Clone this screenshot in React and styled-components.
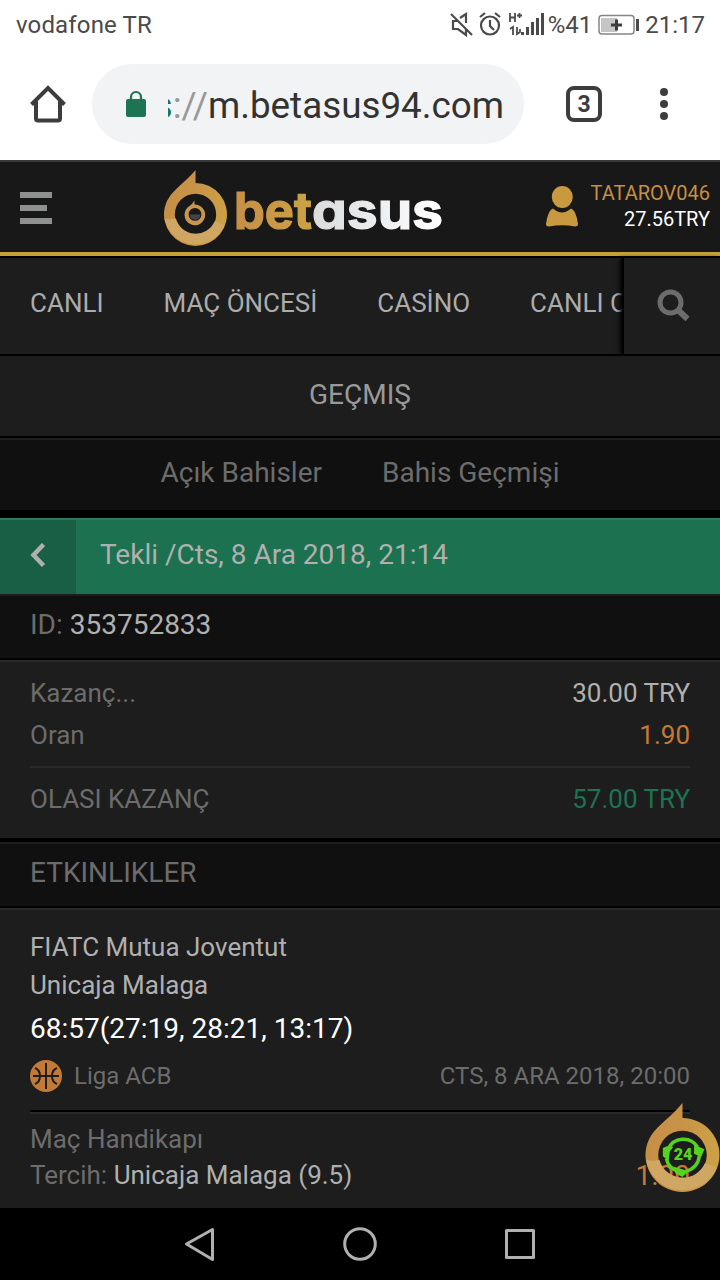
import React from "react";
import styled, { createGlobalStyle } from "styled-components";

const GlobalStyle = createGlobalStyle`
  * {
    box-sizing: border-box;
  }

  body {
    margin: 0;
    background: #000;
    font-family: Roboto, "Noto Sans", sans-serif;
  }
`;

function StatusIcons() {
  return (
    <svg width="96" height="26" viewBox="0 0 96 26" fill="none">
      <g stroke="#4a4a4a" strokeWidth="2.200">
        <path d="M1 2L22 23" />
        <path d="M8 9H3v8h5l8 6v-6M10 6l6-4v9" />
        <circle cx="40" cy="13.500" r="9" />
        <path d="M40 8v6l4 4M30 5l5-4M50 5l-5-4" />
      </g>
      <g stroke="#4a4a4a" strokeWidth="1.800">
        <path d="M60 1v9M65 1v9M60 5.500h5M67 3.500h5M69.500 1v5" />
        <path d="M60 17l3-2v8M67 15v7l3-2v-3" />
      </g>
      <g fill="#4a4a4a">
        <rect x="71" y="20" width="3" height="3" />
        <rect x="76" y="15" width="3" height="8" />
        <rect x="81" y="10" width="3" height="13" />
        <rect x="86" y="6" width="3" height="17" />
        <rect x="91" y="1" width="3" height="22" />
      </g>
    </svg>
  );
}

function BatteryIcon() {
  return (
    <svg width="42" height="22" viewBox="0 0 42 22" fill="none">
      <rect x="1" y="1.500" width="35" height="18.500" rx="3" stroke="#858585" strokeWidth="1.500" />
      <rect x="3" y="4" width="16" height="14" fill="#c4c6c5" />
      <path d="M18.500 5.500v11M13 11h11" stroke="#3c3c3c" strokeWidth="3" />
      <rect x="38" y="5" width="3" height="12" fill="#4a4a4a" />
    </svg>
  );
}

function HomeIcon() {
  return (
    <svg width="36" height="38" viewBox="0 0 36 38" fill="none" stroke="#3c3c3c" strokeWidth="4">
      <path d="M1.500 19.500L18 3l16.500 16.500" />
      <path d="M6 16v17.500q0 2 2 2h20q2 0 2-2V16" />
    </svg>
  );
}

function LockIcon() {
  return (
    <svg width="20" height="28" viewBox="0 0 20 28">
      <path d="M5 10V7a5 5 0 0 1 10 0v3" fill="none" stroke="#1d7352" strokeWidth="2.200" />
      <rect y="9" width="20" height="18" rx="2" fill="#1d7352" />
    </svg>
  );
}

function Emblem({ width, height, children }) {
  return (
    <svg width={width} height={height} viewBox="0 0 64 77">
      <defs>
        <linearGradient id="ring" x1="0" y1="0" x2="1" y2="0">
          <stop offset="0" stopColor="#c68f47" />
          <stop offset="0.500" stopColor="#c89349" />
          <stop offset="1" stopColor="#cca245" />
        </linearGradient>
      </defs>
      <path
        d="M32 0V13A32 32 0 1 1 7 25C16 15 24 10 32 0ZM32 24a21 21 0 1 0 0 42a21 21 0 0 0 0-42Z"
        fill="url(#ring)"
        fillRule="evenodd"
      />
      <path d="M0.500 49Q6 51 12 49A21 21 0 0 0 51.500 52L61.500 56A32 32 0 0 1 0.500 49Z" fill="#d0a663" />
      {children}
    </svg>
  );
}

function Logo() {
  return (
    <LogoBox>
      <Emblem width="63" height="76">
        <path
          d="M31 31V35A10.500 10.500 0 1 1 24 38Q29 35 31 31ZM31.500 38.500a6.500 6.500 0 1 0 0 13a6.500 6.500 0 0 0 0-13Z"
          fill="#c89650"
          fillRule="evenodd"
        />
        <path d="M26 45h11a5.500 5.500 0 0 1-11 0Z" fill="#444" />
      </Emblem>
      <svg width="216" height="72" viewBox="0 0 216 72">
        <defs>
          <linearGradient id="gold">
            <stop offset="0" stopColor="#c68f47" />
            <stop offset="1" stopColor="#cca245" />
          </linearGradient>
          <linearGradient id="silver">
            <stop offset="0" stopColor="#d9dbdc" />
            <stop offset="0.700" stopColor="#f4f5f6" />
            <stop offset="1" stopColor="#fff" />
          </linearGradient>
        </defs>
        <Wordmark x="1" y="59" textLength="78" lengthAdjust="spacingAndGlyphs" fill="url(#gold)" stroke="url(#gold)">
          bet
        </Wordmark>
        <Wordmark x="79" y="59" textLength="131" lengthAdjust="spacingAndGlyphs" fill="url(#silver)" stroke="url(#silver)">
          asus
        </Wordmark>
      </svg>
    </LogoBox>
  );
}

function UserIcon() {
  return (
    <svg width="34" height="42" viewBox="0 0 34 42" fill="#c9993f">
      <ellipse cx="17.300" cy="11" rx="10.500" ry="11" />
      <path d="M8 22.500Q17 30.500 26 22.500Q31 24 33 38Q33 40.500 30 40.500Q17 38 4 40.500Q1 40.500 1 38Q3 24 8 22.500Z" />
    </svg>
  );
}

function SearchIcon() {
  return (
    <svg width="34" height="34" viewBox="0 0 34 34" fill="none" stroke="#6c6c6c">
      <circle cx="13.500" cy="13.500" r="10.500" strokeWidth="5" />
      <path d="M21 21l9.500 9" strokeWidth="6" />
    </svg>
  );
}

function BasketballIcon() {
  return (
    <svg width="32" height="32" viewBox="0 0 32 32" fill="none" stroke="#1d1d1d" strokeWidth="2">
      <circle cx="16" cy="16" r="16" fill="#c47a37" stroke="none" />
      <path d="M16 3v26M3 16h26M5 8q5 2 5 8t-5 8M27 8q-5 2-5 8t5 8" />
    </svg>
  );
}

function App() {
  return (
    <>
      <GlobalStyle />
      <Screen>
        <StatusBar>
          <Carrier>vodafone TR</Carrier>
          <StatusRight>
            <StatusIcons />
            <Percent>%41</Percent>
            <BatteryIcon />
            <Clock>21:17</Clock>
          </StatusRight>
        </StatusBar>
        <BrowserBar>
          <HomeIcon />
          <UrlField>
            <LockIcon />
            <UrlClip>
              <Url>
                <Secure>s</Secure>
                <Slashes>://</Slashes>m.betasus94.com
              </Url>
            </UrlClip>
          </UrlField>
          <TabCount>3</TabCount>
          <Dots>
            <Dot />
            <Dot />
            <Dot />
          </Dots>
        </BrowserBar>

        <Header>
          <Burger>
            <BurgerLine $width={32} />
            <BurgerLine $width={27} />
            <BurgerLine $width={32} />
          </Burger>
          <Logo />
          <User>
            <UserIcon />
            <UserInfo>
              <UserName>TATAROV046</UserName>
              <Balance>27.56TRY</Balance>
            </UserInfo>
          </User>
        </Header>

        <Nav>
          <NavList>
            <NavItem>CANLI</NavItem>
            <NavItem>MAÇ ÖNCESİ</NavItem>
            <NavItem>CASİNO</NavItem>
            <NavItem>CANLI CASİNO</NavItem>
          </NavList>
          <SearchButton>
            <SearchIcon />
          </SearchButton>
        </Nav>

        <PageTitle>GEÇMIŞ</PageTitle>
        <Tabs>
          <span>Açık Bahisler</span>
          <span>Bahis Geçmişi</span>
        </Tabs>

        <BetBar>
          <BackButton>
            <svg width="16" height="26" viewBox="0 0 16 26" fill="none" stroke="#b0b0b0" strokeWidth="4.500">
              <path d="M13.500 2.500L3.500 13l10 10.500" />
            </svg>
          </BackButton>
          <BetTitle>Tekli /Cts, 8 Ara 2018, 21:14</BetTitle>
        </BetBar>
        <BetId>
          ID: <Light>353752833</Light>
        </BetId>

        <Summary>
          <Row $height={42}>
            <span>Kazanç...</span>
            <Light>30.00 TRY</Light>
          </Row>
          <Row $height={42}>
            <span>Oran</span>
            <Odds>1.90</Odds>
          </Row>
          <TotalRow>
            <span>OLASI KAZANÇ</span>
            <Win>57.00 TRY</Win>
          </TotalRow>
        </Summary>

        <SectionTitle>ETKINLIKLER</SectionTitle>
        <Event>
          <Team>FIATC Mutua Joventut</Team>
          <Team>Unicaja Malaga</Team>
          <Score>68:57(27:19, 28:21, 13:17)</Score>
          <League>
            <BasketballIcon />
            <LeagueName>Liga ACB</LeagueName>
            <span>CTS, 8 ARA 2018, 20:00</span>
          </League>
          <Market>
            <Row $height={36}>
              <span>Maç Handikapı</span>
            </Row>
            <Row $height={36}>
              <span>
                Tercih: <Light>Unicaja Malaga (9.5)</Light>
              </span>
              <MarketOdds>1.90</MarketOdds>
            </Row>
          </Market>
          <Support>
            <Emblem width="75" height="89">
              <g fill="none" stroke="#55d31d" strokeWidth="3">
                <path d="M19.500 40A14.500 14.500 0 0 1 45 38M46.500 46A14.500 14.500 0 0 1 35 59M28 59A14.500 14.500 0 0 1 18 48" />
              </g>
              <path d="M15 39q5-3 9-1l-3 4-1 8-5-4ZM42 36l9 4-3 7-6-3ZM24 55l10 3 3 1-5 5-6-3Z" fill="#55d31d" />
              <SupportText x="32.500" y="49.500">
                24
              </SupportText>
            </Emblem>
          </Support>
        </Event>

        <SystemBar>
          <svg width="32" height="36" viewBox="0 0 32 36">
            <path d="M28.500 3.500v30L2.500 18Z" />
          </svg>
          <svg width="36" height="36" viewBox="0 0 36 36">
            <circle cx="18" cy="18" r="15.300" />
          </svg>
          <svg width="32" height="36" viewBox="0 0 32 36">
            <rect x="2.500" y="4.500" width="27" height="27" />
          </svg>
        </SystemBar>
      </Screen>
    </>
  );
}

export default App;

const Screen = styled.div`
  width: 720px;
  height: 1280px;
  display: flex;
  flex-direction: column;
  overflow: hidden;
  background: #000;
`;

const StatusBar = styled.div`
  height: 50px;
  padding: 0 15px 0 16px;
  display: flex;
  align-items: center;
  justify-content: space-between;
  background: #fff;
  color: #4a4a4a;
  font-size: 24px;
`;

const Carrier = styled.span`
  letter-spacing: 0.15px;
`;

const StatusRight = styled.div`
  display: flex;
  align-items: center;
`;

const Percent = styled.span`
  margin: 0 6px 0 2px;
`;

const Clock = styled.span`
  margin-left: 5px;
`;

const BrowserBar = styled.div`
  height: 110px;
  padding: 0 52px 2px 30px;
  display: flex;
  align-items: center;
  background: #fff;
`;

const UrlField = styled.div`
  width: 432px;
  height: 80px;
  margin: 0 42px 0 26px;
  padding: 0 20px 0 34px;
  display: flex;
  align-items: center;
  border-radius: 40px;
  background: #f1f3f4;
`;

const UrlClip = styled.div`
  flex: 1;
  margin: 4px 0 0 22px;
  display: flex;
  justify-content: flex-end;
  overflow: hidden;
`;

const Url = styled.span`
  color: #333;
  font-size: 36.8px;
  line-height: 50px;
  white-space: nowrap;
`;

const Secure = styled.span`
  color: #1d7352;
`;

const Slashes = styled.span`
  color: #999;
`;

const TabCount = styled.div`
  width: 36px;
  height: 36px;
  display: flex;
  align-items: center;
  justify-content: center;
  border: 4px solid #3c3c3c;
  border-radius: 8px;
  color: #3c3c3c;
  font-size: 23px;
  font-weight: 700;
`;

const Dots = styled.div`
  margin-left: auto;
  display: flex;
  flex-direction: column;
  gap: 4px;
`;

const Dot = styled.div`
  width: 8px;
  height: 8px;
  border-radius: 50%;
  background: #3c3c3c;
`;

const Header = styled.div`
  height: 96px;
  padding: 0 10px 0 20px;
  display: flex;
  align-items: flex-start;
  border-top: 2px solid #3a3a3a;
  border-bottom: 4px solid #c5a136;
  background: #181818;
`;

const Burger = styled.div`
  margin-top: 30px;
  display: flex;
  flex-direction: column;
  gap: 7px;
`;

const BurgerLine = styled.div`
  width: ${({ $width }) => $width}px;
  height: 6px;
  background: #8e918f;
`;

const LogoBox = styled.div`
  margin: 8px 0 0 112px;
  display: flex;
  gap: 6px;
`;

const Wordmark = styled.text`
  font-family: Inter, Roboto, sans-serif;
  font-size: 51px;
  font-weight: 700;
  font-feature-settings: "cv11";
  stroke-width: 1.2px;
`;

const User = styled.div`
  margin: 24px 0 0 auto;
  display: flex;
  gap: 12px;
`;

const UserInfo = styled.div`
  margin-top: -6px;
  text-align: right;
  font-size: 20px;
  line-height: 26px;
`;

const UserName = styled.div`
  color: #c78f42;
`;

const Balance = styled.div`
  color: #fff;
`;

const Nav = styled.div`
  height: 98px;
  margin-bottom: 2px;
  display: flex;
  border-top: 2px solid #000;
  background: #1d1d1d;
`;

const NavList = styled.div`
  width: 622px;
  padding: 0 0 7px 30px;
  display: flex;
  align-items: center;
  gap: 60px;
  overflow: hidden;
  color: #acacac;
  font-size: 26px;
`;

const NavItem = styled.span`
  flex: none;
`;

const SearchButton = styled.div`
  flex: 1;
  padding-left: 4px;
  display: flex;
  align-items: center;
  justify-content: center;
  border-left: 2px solid #000;
  box-shadow: -2px 0 4px #000;
`;

const PageTitle = styled.div`
  height: 80px;
  padding-bottom: 4px;
  display: flex;
  align-items: center;
  justify-content: center;
  background: #1d1d1d;
  color: #999;
  font-size: 28px;
`;

const Tabs = styled.div`
  height: 72px;
  margin: 2px 0 8px;
  padding-bottom: 6px;
  display: flex;
  align-items: center;
  justify-content: center;
  gap: 60px;
  border-top: 2px solid #1d1d1d;
  background: #101010;
  color: #6c6c6c;
  font-size: 28px;
`;

const BetBar = styled.div`
  height: 76px;
  display: flex;
  border-top: 2px solid #2c7b5c;
  background: #1c7151;
`;

const BackButton = styled.div`
  width: 76px;
  padding-bottom: 5px;
  display: flex;
  align-items: center;
  justify-content: center;
  background: #185f45;
`;

const BetTitle = styled.div`
  padding-left: 24px;
  color: #b0b0b0;
  font-size: 28px;
  line-height: 69px;
`;

const BetId = styled.div`
  height: 64px;
  margin-bottom: 2px;
  padding-left: 30px;
  border-top: 2px solid #1d1d1d;
  background: #101010;
  color: #6c6c6c;
  font-size: 28px;
  line-height: 58px;
`;

const Light = styled.span`
  color: #b0b0b0;
`;

const Odds = styled.span`
  color: #c47a37;
`;

const MarketOdds = styled(Odds)`
  font-size: 28px;
`;

const Win = styled.span`
  color: #1d7352;
`;

const Summary = styled.div`
  height: 178px;
  margin-bottom: 4px;
  padding: 10px 30px 0;
  border-top: 2px solid #292929;
  background: #1d1d1d;
  color: #6c6c6c;
  font-size: 26px;
`;

const Row = styled.div`
  height: ${({ $height }) => $height}px;
  display: flex;
  align-items: center;
  justify-content: space-between;
`;

const TotalRow = styled(Row)`
  height: 66px;
  margin-top: 10px;
  padding-bottom: 3px;
  border-top: 2px solid #292929;
`;

const SectionTitle = styled.div`
  height: 64px;
  margin-bottom: 2px;
  padding-left: 30px;
  border-top: 2px solid #1d1d1d;
  background: #101010;
  color: #6c6c6c;
  font-size: 28px;
  line-height: 58px;
`;

const Event = styled.div`
  position: relative;
  height: 300px;
  padding: 18px 30px 0;
  border-top: 2px solid #292929;
  background: #1d1d1d;
  color: #6c6c6c;
`;

const Team = styled.div`
  color: #b0b0b0;
  font-size: 26px;
  line-height: 38px;
`;

const Score = styled.div`
  color: #fff;
  font-size: 28px;
  line-height: 50px;
`;

const League = styled.div`
  height: 56px;
  padding-bottom: 12px;
  display: flex;
  align-items: center;
  font-size: 24px;
`;

const LeagueName = styled.span`
  flex: 1;
  margin-left: 12px;
`;

const Market = styled.div`
  border-top: 2px solid #000;
  font-size: 26px;

  &::before {
    content: "";
    display: block;
    height: 2px;
    margin-bottom: 7px;
    background: #292929;
  }
`;

const Support = styled.div`
  position: absolute;
  top: 193px;
  right: 0;
`;

const SupportText = styled.text`
  fill: #55d31d;
  font-size: 14px;
  font-weight: 900;
  text-anchor: middle;
`;

const SystemBar = styled.div`
  height: 72px;
  display: flex;
  align-items: center;
  justify-content: center;
  gap: 126px;
  background: #000;

  svg {
    fill: none;
    stroke: #b0b0b0;
    stroke-width: 3px;
    stroke-linejoin: round;
  }
`;
